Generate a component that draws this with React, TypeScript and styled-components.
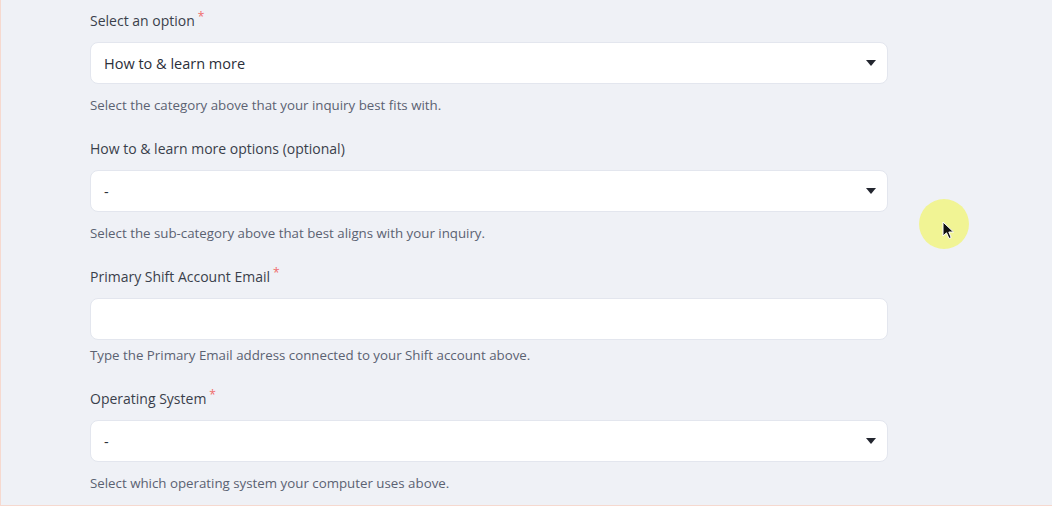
import styled, { createGlobalStyle } from "styled-components";

const GlobalStyle = createGlobalStyle`
  html, body {
    margin: 0;
    padding: 0;
    background: #eff1f6;
  }
  body {
    font-family: "Open Sans", "Lato", sans-serif;
    -webkit-font-smoothing: antialiased;
  }
`;

const Page = styled.div`
  position: relative;
  width: 1052px;
  height: 506px;
  overflow: hidden;
  box-sizing: border-box;
  border-left: 1px solid #f6d9cf;
  border-bottom: 1px solid #f6d9cf;
  background: #eff1f6;
`;

const Form = styled.form`
  display: flex;
  flex-direction: column;
  width: 798px;
  padding: 11px 0 0 89px;
`;

const Field = styled.div`
  display: flex;
  flex-direction: column;
  margin-bottom: 25px;
`;

const Label = styled.label`
  display: flex;
  align-items: flex-start;
  height: 20px;
  line-height: 20px;
  font-size: 14px;
  color: #3a3f4b;
  margin-bottom: 11px;
`;

const Star = styled.span`
  color: #ef6b6b;
  font-size: 12px;
  line-height: 12px;
  margin-left: 3px;
`;

const Box = styled.div`
  position: relative;
  display: flex;
  align-items: center;
  height: 42px;
  box-sizing: border-box;
  background: #ffffff;
  border: 1px solid #e3e6ee;
  border-radius: 8px;
  padding: 0 13px;
  font-size: 14.5px;
  color: #2b2f3a;
`;

const Value = styled.span`
  flex: 1;
`;

const Caret = styled.span`
  width: 0;
  height: 0;
  border-left: 5px solid transparent;
  border-right: 5px solid transparent;
  border-top: 6px solid #23262f;
  margin-right: -2px;
`;

const Help = styled.div<{ $tight?: boolean }>`
  font-size: 13.3px;
  line-height: 18px;
  color: #5b6272;
  margin-top: ${(p) => (p.$tight ? "6px" : "12px")};
`;

const Highlight = styled.div`
  position: absolute;
  left: 918px;
  top: 199px;
  width: 50px;
  height: 50px;
  border-radius: 50%;
  background: #f1f48a;
  opacity: 0.9;
`;

const Pointer = styled.svg`
  position: absolute;
  left: 941px;
  top: 221px;
`;

type FieldProps = {
  label: string;
  required?: boolean;
  value?: string;
  select?: boolean;
  help: string;
};

function FormField({ label, required, value, select, help }: FieldProps) {
  return (
    <Field>
      <Label>
        {label}
        {required && <Star>*</Star>}
      </Label>
      <Box>
        <Value>{value}</Value>
        {select && <Caret />}
      </Box>
      <Help $tight={!select}>{help}</Help>
    </Field>
  );
}

export default function App() {
  return (
    <>
      <GlobalStyle />
      <Page>
        <Form>
          <FormField
            label="Select an option"
            required
            select
            value="How to & learn more"
            help="Select the category above that your inquiry best fits with."
          />
          <FormField
            label="How to & learn more options (optional)"
            select
            value="-"
            help="Select the sub-category above that best aligns with your inquiry."
          />
          <FormField
            label="Primary Shift Account Email"
            required
            help="Type the Primary Email address connected to your Shift account above."
          />
          <FormField
            label="Operating System"
            required
            select
            value="-"
            help="Select which operating system your computer uses above."
          />
        </Form>
        <Highlight />
        <Pointer width="13" height="19" viewBox="0 0 13 19">
          <path
            d="M1 1 L1 15 L4.5 11.8 L7 17.5 L9.2 16.6 L6.8 11 L11.5 11 Z"
            fill="#111"
            stroke="#fff"
            strokeWidth="1"
          />
        </Pointer>
      </Page>
    </>
  );
}
